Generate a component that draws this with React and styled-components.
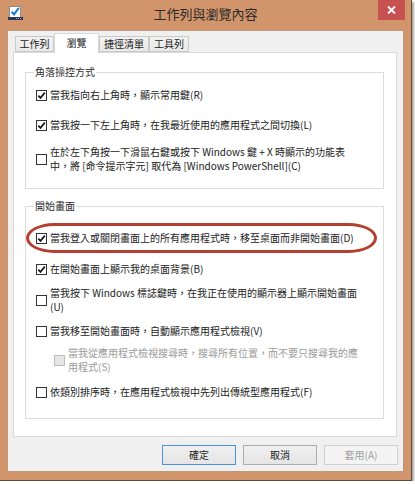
import React from 'react';
import styled, { createGlobalStyle } from 'styled-components';

const GlobalStyle = createGlobalStyle`
  html, body {
    margin: 0;
    padding: 0;
    background: #ffffff;
  }
  body {
    font-family: "Noto Sans CJK TC", "Liberation Sans", sans-serif;
    color: #222;
  }
`;

const Window = styled.div`
  width: 411px;
  height: 480px;
  background: #d2946a;
  border-right: 1px solid #5e4b3c;
  border-bottom: 1px solid #5e4b3c;
  box-shadow: 2px 2px 2px rgba(0, 0, 0, 0.35);
  display: flex;
  flex-direction: column;
`;

const TitleBar = styled.div`
  height: 30px;
  display: grid;
  grid-template-columns: 1fr auto 1fr;
  align-items: start;
`;

const AppIcon = styled.div`
  padding: 6px 0 0 8px;
  line-height: 0;
`;

const Title = styled.div`
  font-size: 13px;
  line-height: 28px;
  color: #2a2a2a;
`;

const CloseButton = styled.div`
  justify-self: end;
  margin-right: 6px;
  width: 27px;
  height: 20px;
  background: #c75050;
  display: flex;
  align-items: center;
  justify-content: center;
`;

const Client = styled.div`
  margin: 0 7px 8px 7px;
  background: #f0f0f0;
  border: 1px solid #b99a7e;
  padding: 2px 6px 6px 5px;
  display: flex;
  flex-direction: column;
`;

const TabRow = styled.div`
  display: flex;
  align-items: flex-end;
  height: 20px;
  margin-left: 2px;
`;

const Tab = styled.div`
  box-sizing: border-box;
  width: ${p => p.$w}px;
  height: ${p => (p.$active ? 20 : 16)}px;
  margin-bottom: ${p => (p.$active ? 0 : 1)}px;
  border: 1px solid ${p => (p.$active ? '#d9d9d9' : '#c9c9c9')};
  border-bottom: ${p => (p.$active ? 'none' : '1px solid #c9c9c9')};
  background: ${p => (p.$active ? '#fff' : 'linear-gradient(#f2f2f2, #e8e8e8)')};
  position: relative;
  z-index: ${p => (p.$active ? 1 : 0)};
  font-size: 10px;
  line-height: ${p => (p.$active ? 17 : 14)}px;
  text-align: center;
  color: #222;
`;

const Panel = styled.div`
  box-sizing: border-box;
  margin-top: -1px;
  height: 385px;
  background: #fff;
  border: 1px solid #d9d9d9;
  padding: 13px 12px 0 11px;
`;

const Group = styled.fieldset`
  margin: ${p => p.$top || 0}px 0 0 0;
  padding: 0 12px ${p => p.$bottom}px 10px;
  border: 1px solid #dcdcdc;
  min-width: 0;
`;

const Legend = styled.legend`
  font-size: 10px;
  line-height: 12px;
  padding: 0 1px;
  margin-left: -2px;
  color: #2a2a2a;
`;

const Row = styled.div`
  position: relative;
  display: flex;
  align-items: center;
  gap: 3px;
  margin-top: ${p => p.$top}px;
  margin-left: ${p => p.$indent || 0}px;
`;

const Box = styled.span`
  box-sizing: border-box;
  flex-shrink: 0;
  width: 11px;
  height: 11px;
  border: 1px solid ${p => (p.$disabled ? '#bcbcbc' : '#333')};
  background: ${p => (p.$disabled ? '#e6e6e6' : '#fff')};
  display: flex;
  align-items: center;
  justify-content: center;
`;

const Label = styled.span`
  font-size: 10px;
  line-height: 14px;
  white-space: nowrap;
  color: ${p => (p.$disabled ? '#9a9a9a' : '#222')};
`;

const Highlight = styled.span`
  position: absolute;
  left: -10px;
  top: -8px;
  width: 351px;
  height: 30px;
  box-sizing: border-box;
  border: 3px solid #b4412f;
  border-radius: 28px / 15px;
  pointer-events: none;
`;

const ButtonRow = styled.div`
  display: flex;
  justify-content: flex-end;
  gap: 7px;
  margin-top: 8px;
  margin-right: -1px;
`;

const Button = styled.div`
  box-sizing: border-box;
  width: 74px;
  height: 20px;
  font-size: 10px;
  line-height: 18px;
  text-align: center;
  border: 1px solid ${p => (p.$primary ? '#4a93d9' : p.$disabled ? '#d0d0d0' : '#acacac')};
  background: ${p => (p.$disabled ? '#f4f4f4' : 'linear-gradient(#f0f0f0, #e5e5e5)')};
  color: ${p => (p.$disabled ? '#a0a0a0' : '#222')};
`;

const Check = () => (
  <svg width="9" height="9" viewBox="0 0 9 9">
    <path d="M1.3 4.6 L3.5 6.9 L7.8 1.6" fill="none" stroke="#1a1a1a" strokeWidth="1.7" />
  </svg>
);

const Option = ({ checked, disabled, top, indent, children, highlight }) => (
  <Row $top={top} $indent={indent}>
    <Box $disabled={disabled}>{checked && <Check />}</Box>
    <Label $disabled={disabled}>{children}</Label>
    {highlight && <Highlight />}
  </Row>
);

const tabs = [
  { label: '工作列', w: 39 },
  { label: '瀏覽', w: 45, active: true },
  { label: '捷徑清單', w: 50 },
  { label: '工具列', w: 40 },
];

export default function App() {
  return (
    <>
      <GlobalStyle />
      <Window>
        <TitleBar>
          <AppIcon>
            <svg width="15" height="15" viewBox="0 0 15 15">
              <rect x="1.5" y="0.5" width="11" height="11" fill="#fff" stroke="#8c8c8c" />
              <path d="M3.6 5.8 L6 8.4 L10.8 1.8" fill="none" stroke="#1f7ad4" strokeWidth="2" />
              <rect x="0" y="11" width="15" height="3" fill="#2c3a56" />
              <rect x="8" y="12" width="1" height="1" fill="#9bb6d4" />
              <rect x="10" y="12" width="1" height="1" fill="#9bb6d4" />
              <rect x="12" y="12" width="1" height="1" fill="#9bb6d4" />
            </svg>
          </AppIcon>
          <Title>工作列與瀏覽內容</Title>
          <CloseButton>
            <svg width="9" height="8" viewBox="0 0 9 8">
              <path d="M1 0.5 L8 7.5 M8 0.5 L1 7.5" stroke="#fff" strokeWidth="1.9" />
            </svg>
          </CloseButton>
        </TitleBar>

        <Client>
          <TabRow>
            {tabs.map(t => (
              <Tab key={t.label} $w={t.w} $active={t.active}>
                {t.label}
              </Tab>
            ))}
          </TabRow>

          <Panel>
            <Group $bottom={15}>
              <Legend>角落操控方式</Legend>
              <Option checked top={10}>當我指向右上角時，顯示常用鍵(R)</Option>
              <Option checked top={16}>當我按一下左上角時，在我最近使用的應用程式之間切換(L)</Option>
              <Option top={13}>
                在於左下角按一下滑鼠右鍵或按下 Windows 鍵 + X 時顯示的功能表
                <br />
                中，將 [命令提示字元] 取代為 [Windows PowerShell](C)
              </Option>
            </Group>

            <Group $top={11} $bottom={19}>
              <Legend>開始畫面</Legend>
              <Option checked top={19} highlight>
                當我登入或關閉畫面上的所有應用程式時，移至桌面而非開始畫面(D)
              </Option>
              <Option checked top={17}>在開始畫面上顯示我的桌面背景(B)</Option>
              <Option top={10}>
                當我按下 Windows 標誌鍵時，在我正在使用的顯示器上顯示開始畫面
                <br />
                (U)
              </Option>
              <Option top={10}>當我移至開始畫面時，自動顯示應用程式檢視(V)</Option>
              <Option disabled top={8} indent={18}>
                當我從應用程式檢視搜尋時，搜尋所有位置，而不要只搜尋我的應
                <br />
                用程式(S)
              </Option>
              <Option top={11}>依類別排序時，在應用程式檢視中先列出傳統型應用程式(F)</Option>
            </Group>
          </Panel>

          <ButtonRow>
            <Button $primary>確定</Button>
            <Button>取消</Button>
            <Button $disabled>套用(A)</Button>
          </ButtonRow>
        </Client>
      </Window>
    </>
  );
}
